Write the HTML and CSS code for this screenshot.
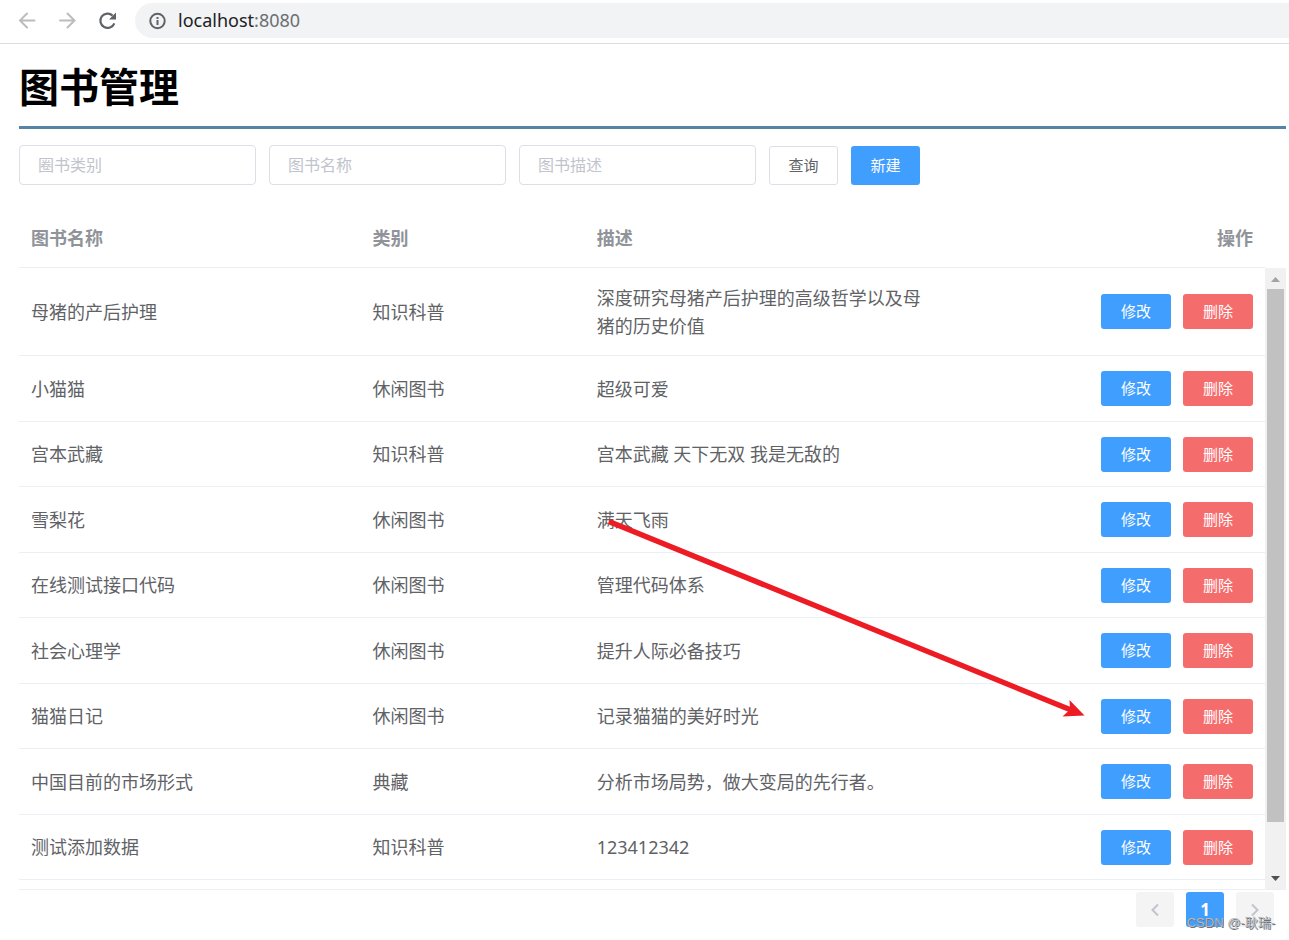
FILE: index.html
```html
<!DOCTYPE html>
<html lang="zh-CN">
<head>
<meta charset="utf-8">
<title>图书管理</title>
<link rel="stylesheet" href="styles.css">
</head>
<body>
<header class="browser-bar">
  <nav class="browser-nav" aria-label="浏览器">
    <button class="nav-btn" type="button" aria-label="后退"><svg width="20" height="20" viewBox="0 0 20 20" fill="none" stroke="#babcbe" stroke-width="2" stroke-linecap="round"><path d="M17.500 9.500H3M10 2.500l-7 7 7 7"/></svg></button>
    <button class="nav-btn" type="button" aria-label="前进"><svg width="20" height="20" viewBox="0 0 20 20" fill="none" stroke="#babcbe" stroke-width="2" stroke-linecap="round"><path d="M3 9.500h14.500M10.500 2.500l7 7-7 7"/></svg></button>
    <button class="nav-btn" type="button" aria-label="刷新"><svg width="20" height="20" viewBox="0 0 20 20"><path d="M17.300 12.300A7.200 7.200 0 1 1 15.600 4.600" fill="none" stroke="#5f6368" stroke-width="2.200"/><path d="M19 1.500v7h-7z" fill="#5f6368"/></svg></button>
  </nav>
  <div class="address">
    <svg width="18" height="18" viewBox="0 0 18 18" fill="none" stroke="#5f6368" stroke-width="2"><circle cx="9.500" cy="9" r="7.200"/><path d="M9.500 8v5M9.500 5v2"/></svg>
    <span class="url">localhost<span class="port">:8080</span></span>
  </div>
</header>
<main class="page">
  <h1 class="title">图书管理</h1>
  <form class="filters">
    <input class="field" type="text" placeholder="圈书类别" aria-label="图书类别">
    <input class="field" type="text" placeholder="图书名称" aria-label="图书名称">
    <input class="field" type="text" placeholder="图书描述" aria-label="图书描述">
    <button class="btn btn-plain" type="button">查询</button>
    <button class="btn btn-primary" type="button">新建</button>
  </form>
  <section class="list">
    <div class="list-main">
      <table class="books">
        <colgroup><col class="col-name"><col class="col-type"><col class="col-desc"><col></colgroup>
        <thead><tr><th>图书名称</th><th>类别</th><th>描述</th><th class="ops-head">操作</th></tr></thead>
        <tbody>
          <tr><td>母猪的产后护理</td><td>知识科普</td><td>深度研究母猪产后护理的高级哲学以及母猪的历史价值</td><td><div class="ops"><button class="btn-sm btn-primary" type="button">修改</button><button class="btn-sm btn-danger" type="button">删除</button></div></td></tr>
          <tr><td>小猫猫</td><td>休闲图书</td><td>超级可爱</td><td><div class="ops"><button class="btn-sm btn-primary" type="button">修改</button><button class="btn-sm btn-danger" type="button">删除</button></div></td></tr>
          <tr><td>宫本武藏</td><td>知识科普</td><td>宫本武藏 天下无双 我是无敌的</td><td><div class="ops"><button class="btn-sm btn-primary" type="button">修改</button><button class="btn-sm btn-danger" type="button">删除</button></div></td></tr>
          <tr><td>雪梨花</td><td>休闲图书</td><td>满天飞雨</td><td><div class="ops"><button class="btn-sm btn-primary" type="button">修改</button><button class="btn-sm btn-danger" type="button">删除</button></div></td></tr>
          <tr><td>在线测试接口代码</td><td>休闲图书</td><td>管理代码体系</td><td><div class="ops"><button class="btn-sm btn-primary" type="button">修改</button><button class="btn-sm btn-danger" type="button">删除</button></div></td></tr>
          <tr><td>社会心理学</td><td>休闲图书</td><td>提升人际必备技巧</td><td><div class="ops"><button class="btn-sm btn-primary" type="button">修改</button><button class="btn-sm btn-danger" type="button">删除</button></div></td></tr>
          <tr><td>猫猫日记</td><td>休闲图书</td><td>记录猫猫的美好时光</td><td><div class="ops"><button class="btn-sm btn-primary" type="button">修改</button><button class="btn-sm btn-danger" type="button">删除</button></div></td></tr>
          <tr><td>中国目前的市场形式</td><td>典藏</td><td>分析市场局势，做大变局的先行者。</td><td><div class="ops"><button class="btn-sm btn-primary" type="button">修改</button><button class="btn-sm btn-danger" type="button">删除</button></div></td></tr>
          <tr><td>测试添加数据</td><td>知识科普</td><td>123412342</td><td><div class="ops"><button class="btn-sm btn-primary" type="button">修改</button><button class="btn-sm btn-danger" type="button">删除</button></div></td></tr>
        </tbody>
      </table>
    </div>
    <div class="scrollbar">
      <svg class="scroll-arrow" width="21" height="21" viewBox="0 0 21 21"><path d="M6 14l4.500-5 4.500 5z" fill="#a3a3a3"/></svg>
      <div class="track"><div class="thumb"></div></div>
      <svg class="scroll-arrow" width="21" height="21" viewBox="0 0 21 21"><path d="M6 8h9l-4.500 5z" fill="#505050"/></svg>
    </div>
  </section>
  <nav class="pager" aria-label="分页">
    <button class="page-btn" type="button" aria-label="上一页" disabled><svg width="14" height="14" viewBox="0 0 14 14" fill="none" stroke="#c0c4cc" stroke-width="2"><path d="M10 1.500L4.500 7l5.500 5.500"/></svg></button>
    <button class="page-btn current" type="button">1</button>
    <button class="page-btn" type="button" aria-label="下一页" disabled><svg width="14" height="14" viewBox="0 0 14 14" fill="none" stroke="#c0c4cc" stroke-width="2"><path d="M4 1.500L9.500 7 4 12.500"/></svg></button>
  </nav>
</main>
<svg class="pointer" width="480" height="204" viewBox="0 0 480 204" aria-hidden="true"><path d="M4 5.500L466 194" stroke="#ed1c24" stroke-width="5.400" fill="none"/><path d="M479.500 199.500L464.500 184l.5 9.500-7.500 7z" fill="#ed1c24"/></svg>
<div class="watermark">CSDN @-耿瑞-</div>
</body>
</html>
```
FILE: styles.css
```css
* { box-sizing: border-box; }
body {
  position: relative;
  margin: 0;
  min-height: 100vh;
  background: #fff;
  color: #606266;
  font: 18px/28px "Noto Sans", "Noto Sans CJK SC", sans-serif;
}
button, input { font-family: inherit; margin: 0; }
button { display: flex; align-items: center; justify-content: center; padding: 0; border: 0; cursor: pointer; }
svg { display: block; flex: none; }

.browser-bar { display: flex; align-items: center; height: 44px; padding: 0 0 2px 7px; border-bottom: 1px solid #dadce0; }
.browser-nav { display: flex; }
.nav-btn { width: 40px; height: 36px; background: none; }
.address {
  flex: 1;
  display: flex;
  align-items: center;
  gap: 12px;
  height: 35px;
  margin-left: 8px;
  padding-left: 13px;
  border-radius: 18px 0 0 18px;
  background: #f1f3f4;
}
.url { padding-bottom: 2px; color: #202124; font-size: 18px; }
.port { color: #6b6f73; }

.page { padding: 18px 3px 0 19px; }
.title {
  margin: 0;
  height: 67px;
  border-bottom: 3px solid #5584a5;
  color: #000;
  font-size: 40px;
  line-height: 46px;
  font-family: "Noto Sans CJK SC", sans-serif;
}
.filters { display: flex; align-items: flex-end; gap: 13px; margin: 16px 0 23px; }
.field {
  width: 237px;
  height: 40px;
  padding: 0 18px;
  border: 1px solid #dcdfe6;
  border-radius: 4px;
  color: #606266;
  font-size: 16px;
}
.field::placeholder { color: #c0c4cc; opacity: 1; }
.btn { width: 69px; height: 39px; padding-bottom: 2px; border-radius: 3px; font-size: 15px; }
.btn-plain { border: 1px solid #dcdfe6; background: #fff; color: #606266; }
.btn-primary { background: #409eff; color: #fff; }
.btn-danger { background: #f56c6c; color: #fff; }

.list { display: flex; border-bottom: 1px solid #ebeef5; }
.list-main { flex: 1; padding-bottom: 9px; }
.books { width: 100%; table-layout: fixed; border-spacing: 0; }
.col-name { width: 27.4%; }
.col-type { width: 18%; }
.col-desc { width: 28%; }
.books th, .books td { padding: 0 12px; border-bottom: 1px solid #ebeef5; text-align: left; vertical-align: middle; }
.books th { height: 60px; color: #909399; font-weight: 700; }
.books .ops-head { text-align: right; }
.books td { height: 65px; }
.books tr:nth-child(even) td { height: 66px; }
.books tr:first-child td { height: 88px; }
.ops { display: flex; justify-content: flex-end; gap: 12px; }
.btn-sm { width: 70px; height: 35px; padding-bottom: 2px; border-radius: 3px; font-size: 15px; }

.scrollbar { display: flex; flex-direction: column; width: 21px; margin-top: 60px; background: #f1f1f1; }
.track { flex: 1; padding: 0 2px; }
.thumb { height: 92%; background: #c1c1c1; }

.pager { display: flex; justify-content: flex-end; gap: 12px; padding: 2px 12px 12px; }
.page-btn { width: 38px; height: 35px; border-radius: 3px; background: #f4f4f5; color: #606266; font-size: 17px; font-weight: 700; }
.page-btn.current { background: #409eff; color: #fff; }

.pointer { position: absolute; left: 605px; top: 516px; pointer-events: none; }
.watermark {
  position: absolute;
  right: 14px;
  bottom: 7px;
  color: #b4b8bd;
  font: 13px/20px "Liberation Sans", "Noto Sans CJK SC", sans-serif;
  text-shadow: 1px 1px 0 #70747a;
  pointer-events: none;
}
```
